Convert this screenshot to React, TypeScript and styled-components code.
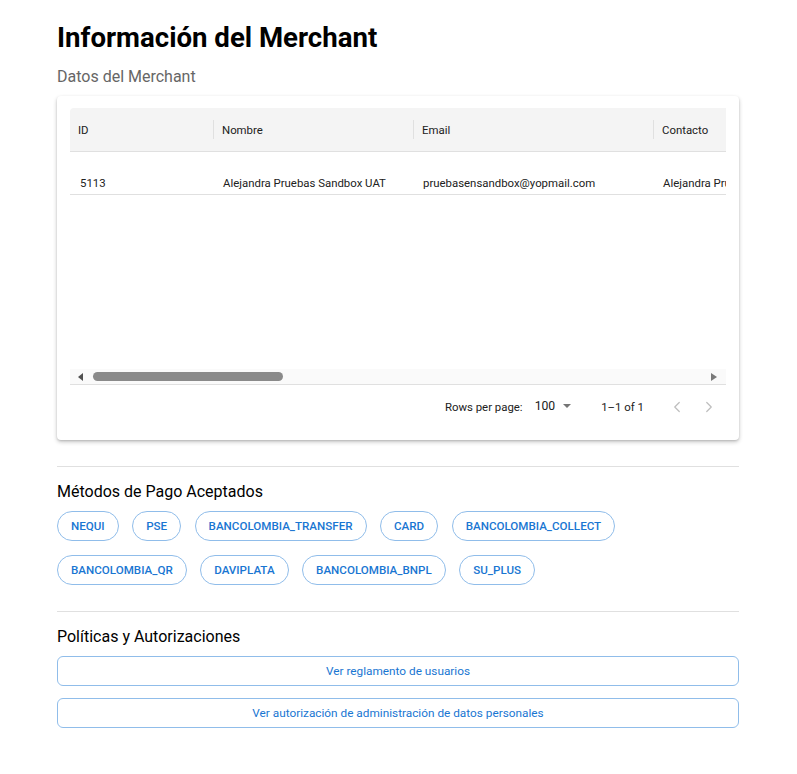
import React from 'react';
import styled, { createGlobalStyle } from 'styled-components';
import { ChevronLeft, ChevronRight } from 'lucide-react';

const columns = [
  { key: 'id', label: 'ID', width: 143 },
  { key: 'nombre', label: 'Nombre', width: 200 },
  { key: 'email', label: 'Email', width: 240 },
  { key: 'contacto', label: 'Contacto', width: 240 },
  { key: 'telefono', label: 'Teléfono', width: 200 },
  { key: 'nit', label: 'NIT', width: 200 },
];

const merchant: Record<string, string> = {
  id: '5113',
  nombre: 'Alejandra Pruebas Sandbox UAT',
  email: 'pruebasensandbox@yopmail.com',
  contacto: 'Alejandra Pruebas',
  telefono: '3000000000',
  nit: '900000000',
};

const metodos = [
  'NEQUI',
  'PSE',
  'BANCOLOMBIA_TRANSFER',
  'CARD',
  'BANCOLOMBIA_COLLECT',
  'BANCOLOMBIA_QR',
  'DAVIPLATA',
  'BANCOLOMBIA_BNPL',
  'SU_PLUS',
];

const politicas = [
  'Ver reglamento de usuarios',
  'Ver autorización de administración de datos personales',
];

function App() {
  return (
    <>
      <GlobalStyle />
      <Page>
        <Title>Información del Merchant</Title>
        <Subtitle>Datos del Merchant</Subtitle>
        <Card>
          <TableViewport>
            <HeaderRow>
              {columns.map((c, i) => (
                <HeaderCell key={c.key} $width={c.width} $first={i === 0}>
                  {c.label}
                </HeaderCell>
              ))}
            </HeaderRow>
            <DataRow>
              {columns.map((c) => (
                <DataCell key={c.key} $width={c.width}>
                  {merchant[c.key]}
                </DataCell>
              ))}
            </DataRow>
          </TableViewport>
          <ScrollTrack>
            <Arrow $dir="left" />
            <Thumb />
            <Arrow $dir="right" />
          </ScrollTrack>
          <Pagination>
            <PagLabel>Rows per page:</PagLabel>
            <PageSize>
              100
              <Caret />
            </PageSize>
            <PagCount>1–1 of 1</PagCount>
            <PagNav>
              <ChevronLeft size={18} strokeWidth={1.6} />
              <ChevronRight size={18} strokeWidth={1.6} />
            </PagNav>
          </Pagination>
        </Card>

        <Divider />
        <SectionTitle>Métodos de Pago Aceptados</SectionTitle>
        <ChipList>
          {metodos.map((m) => (
            <Chip key={m}>{m}</Chip>
          ))}
        </ChipList>

        <Divider />
        <SectionTitle>Políticas y Autorizaciones</SectionTitle>
        <ButtonList>
          {politicas.map((p) => (
            <OutlineButton key={p}>{p}</OutlineButton>
          ))}
        </ButtonList>
      </Page>
    </>
  );
}

const GlobalStyle = createGlobalStyle`
  body {
    margin: 0;
    background: #fff;
    font-family: Roboto, "Noto Sans", sans-serif;
    color: #212121;
  }
`;

const Page = styled.div`
  width: 682px;
  padding: 21px 58px 40px 57px;
`;

const Title = styled.h1`
  margin: 0;
  font-size: 27.6px;
  font-weight: 700;
  line-height: 34px;
  color: #000;
`;

const Subtitle = styled.div`
  margin-top: 10px;
  margin-bottom: 7px;
  font-size: 16px;
  line-height: 24px;
  color: #666;
`;

const Card = styled.div`
  background: #fff;
  border-radius: 4px;
  box-shadow: 0 2px 4px rgba(0, 0, 0, 0.22), 0 1px 2px rgba(0, 0, 0, 0.12);
  padding: 12px 13px 12px;
`;

const TableViewport = styled.div`
  height: 261px;
  overflow: hidden;
  font-size: 11.4px;
`;

const HeaderRow = styled.div`
  display: flex;
  width: max-content;
  height: 43px;
  background: #f4f4f4;
  border-bottom: 1px solid #e0e0e0;
  border-radius: 4px 4px 0 0;
`;

const HeaderCell = styled.div<{ $width: number; $first: boolean }>`
  flex: 0 0 ${(p) => p.$width}px;
  display: flex;
  align-items: center;
  padding-left: ${(p) => (p.$first ? 8 : 9)}px;
  box-sizing: border-box;
  color: #212121;
  position: relative;
  &::before {
    content: '';
    display: ${(p) => (p.$first ? 'none' : 'block')};
    position: absolute;
    left: 0;
    top: 12px;
    bottom: 12px;
    width: 1px;
    background: #e0e0e0;
  }
`;

const DataRow = styled.div`
  display: flex;
  width: max-content;
  height: 42px;
  border-bottom: 1px solid #e0e0e0;
`;

const DataCell = styled.div<{ $width: number }>`
  flex: 0 0 ${(p) => p.$width}px;
  box-sizing: border-box;
  padding: 24px 10px 0;
  white-space: nowrap;
  overflow: hidden;
  color: #212121;
`;

const ScrollTrack = styled.div`
  display: flex;
  align-items: center;
  height: 15px;
  background: #fafafa;
  border-bottom: 1px solid #e0e0e0;
  padding: 0 9px 0 8px;
`;

const Arrow = styled.span<{ $dir: 'left' | 'right' }>`
  width: 0;
  height: 0;
  border-top: 4px solid transparent;
  border-bottom: 4px solid transparent;
  ${(p) =>
    p.$dir === 'left'
      ? 'border-right: 5px solid #505050; margin-right: 10px;'
      : 'border-left: 6px solid #7a7a7a; margin-left: auto;'}
`;

const Thumb = styled.div`
  width: 190px;
  height: 9px;
  border-radius: 5px;
  background: #8a8a8a;
`;

const Pagination = styled.div`
  display: flex;
  align-items: center;
  justify-content: flex-end;
  height: 43px;
  font-size: 11.4px;
  color: #212121;
  padding-right: 8px;
`;

const PagLabel = styled.span`
  margin-right: 12px;
`;

const PageSize = styled.span`
  display: flex;
  align-items: center;
  gap: 8px;
  margin-right: 30px;
  font-size: 12.2px;
  position: relative;
  top: -1px;
`;

const Caret = styled.span`
  width: 0;
  height: 0;
  border-left: 4px solid transparent;
  border-right: 4px solid transparent;
  border-top: 4px solid #757575;
`;

const PagCount = styled.span`
  margin-right: 24px;
`;

const PagNav = styled.span`
  display: flex;
  gap: 14px;
  color: #bdbdbd;
`;

const Divider = styled.hr`
  border: none;
  border-top: 1px solid #e0e0e0;
  margin: 26px 0 13px;
`;

const SectionTitle = styled.h2`
  margin: 0 0 7px;
  font-size: 16px;
  font-weight: 400;
  line-height: 24px;
  color: #000;
`;

const ChipList = styled.div`
  display: flex;
  flex-wrap: wrap;
  gap: 14px 13.5px;
`;

const Chip = styled.span`
  display: inline-flex;
  align-items: center;
  height: 30px;
  box-sizing: border-box;
  padding: 0 13px;
  border: 1px solid #90bdea;
  border-radius: 16px;
  font-size: 11.6px;
  font-weight: 500;
  letter-spacing: 0;
  color: #1976d2;
`;

const ButtonList = styled.div`
  display: flex;
  flex-direction: column;
  gap: 12px;
`;

const OutlineButton = styled.button`
  height: 30px;
  width: 100%;
  background: #fff;
  border: 1px solid #90bdea;
  border-radius: 6px;
  font-family: Roboto, "Noto Sans", sans-serif;
  font-size: 11.8px;
  letter-spacing: 0;
  color: #1976d2;
  cursor: pointer;
`;

export default App;
